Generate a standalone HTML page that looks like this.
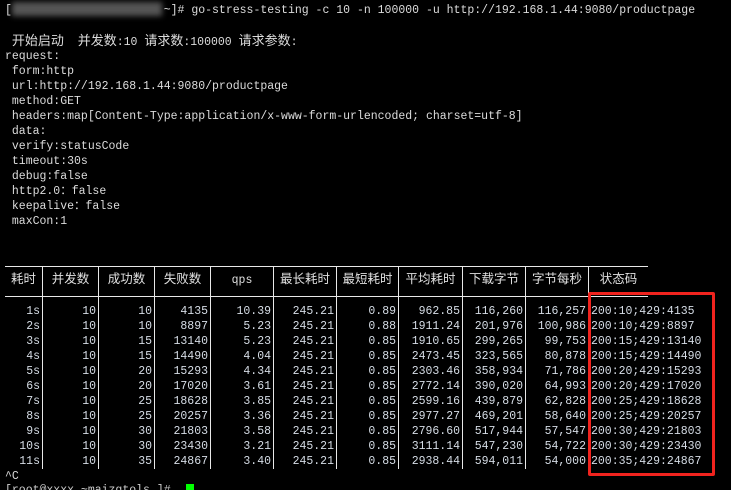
<!DOCTYPE html>
<html><head><meta charset="utf-8"><style>
html,body{margin:0;padding:0;background:#000;width:731px;height:490px;overflow:hidden;position:relative}
body{font-family:"Liberation Mono","Noto Sans CJK SC",monospace;font-size:11.5px;color:#dcdcdc}
.l{position:absolute;left:5px;white-space:pre;line-height:15px}
.r{position:absolute;left:0;height:15px;line-height:15px;white-space:pre}
.r span{position:absolute;top:0;text-align:right;color:#d6dde6}
.h{position:absolute;background:#e8e8e8}
.hd span{text-align:center;color:#e0e0e0;font-size:12.5px}
.c{font-size:13px}
</style></head><body>
<div style="position:absolute;left:12px;top:2px;width:150px;height:14px;background:#555;filter:blur(3px)"></div>
<div class="l" style="top:3px">[                      ~]# go-stress-testing -c 10 -n 100000 -u http://192.168.1.44:9080/productpage</div>
<div class="l" style="top:34px"> <span class="c">开始启动</span>  <span class="c">并发数</span>:10 <span class="c">请求数</span>:100000 <span class="c">请求参数</span>:</div>
<div class="l" style="top:49px">request:
 form:http
 url:http://192.168.1.44:9080/productpage
 method:GET
 headers:map[Content-Type:application/x-www-form-urlencoded; charset=utf-8]
 data:
 verify:statusCode
 timeout:30s
 debug:false
 http2.0：false
 keepalive：false
 maxCon:1</div>

<div class="h" style="left:5px;top:266px;width:643px;height:1px"></div>
<div class="h" style="left:5px;top:296px;width:643px;height:1px"></div>
<div class="h" style="left:42px;top:266px;width:1px;height:203px"></div>
<div class="h" style="left:98px;top:266px;width:1px;height:203px"></div>
<div class="h" style="left:154px;top:266px;width:1px;height:203px"></div>
<div class="h" style="left:210px;top:266px;width:1px;height:203px"></div>
<div class="h" style="left:273px;top:266px;width:1px;height:203px"></div>
<div class="h" style="left:336px;top:266px;width:1px;height:203px"></div>
<div class="h" style="left:398px;top:266px;width:1px;height:203px"></div>
<div class="h" style="left:462px;top:266px;width:1px;height:203px"></div>
<div class="h" style="left:525px;top:266px;width:1px;height:203px"></div>
<div class="h" style="left:588px;top:266px;width:1px;height:30px"></div>

<div class="r hd" style="top:273px">
<span style="left:5px;width:37px">耗时</span><span style="left:43px;width:55px">并发数</span><span style="left:99px;width:55px">成功数</span><span style="left:155px;width:55px">失败数</span><span style="left:211px;width:62px;font-size:11.5px">qps</span><span style="left:274px;width:62px">最长耗时</span><span style="left:337px;width:61px">最短耗时</span><span style="left:399px;width:63px">平均耗时</span><span style="left:463px;width:62px">下载字节</span><span style="left:526px;width:62px">字节每秒</span><span style="left:589px;width:59px">状态码</span>
</div>

<div class="r" style="top:304px"><span style="left:0;width:40px">1s</span><span style="left:0;width:96px">10</span><span style="left:0;width:152px">10</span><span style="left:0;width:208px">4135</span><span style="left:0;width:271px">10.39</span><span style="left:0;width:334px">245.21</span><span style="left:0;width:396px">0.89</span><span style="left:0;width:460px">962.85</span><span style="left:0;width:523px">116,260</span><span style="left:0;width:586px">116,257</span><span style="left:591px;text-align:left">200:10;429:4135</span></div>
<div class="r" style="top:319px"><span style="left:0;width:40px">2s</span><span style="left:0;width:96px">10</span><span style="left:0;width:152px">10</span><span style="left:0;width:208px">8897</span><span style="left:0;width:271px">5.23</span><span style="left:0;width:334px">245.21</span><span style="left:0;width:396px">0.88</span><span style="left:0;width:460px">1911.24</span><span style="left:0;width:523px">201,976</span><span style="left:0;width:586px">100,986</span><span style="left:591px;text-align:left">200:10;429:8897</span></div>
<div class="r" style="top:334px"><span style="left:0;width:40px">3s</span><span style="left:0;width:96px">10</span><span style="left:0;width:152px">15</span><span style="left:0;width:208px">13140</span><span style="left:0;width:271px">5.23</span><span style="left:0;width:334px">245.21</span><span style="left:0;width:396px">0.85</span><span style="left:0;width:460px">1910.65</span><span style="left:0;width:523px">299,265</span><span style="left:0;width:586px">99,753</span><span style="left:591px;text-align:left">200:15;429:13140</span></div>
<div class="r" style="top:349px"><span style="left:0;width:40px">4s</span><span style="left:0;width:96px">10</span><span style="left:0;width:152px">15</span><span style="left:0;width:208px">14490</span><span style="left:0;width:271px">4.04</span><span style="left:0;width:334px">245.21</span><span style="left:0;width:396px">0.85</span><span style="left:0;width:460px">2473.45</span><span style="left:0;width:523px">323,565</span><span style="left:0;width:586px">80,878</span><span style="left:591px;text-align:left">200:15;429:14490</span></div>
<div class="r" style="top:364px"><span style="left:0;width:40px">5s</span><span style="left:0;width:96px">10</span><span style="left:0;width:152px">20</span><span style="left:0;width:208px">15293</span><span style="left:0;width:271px">4.34</span><span style="left:0;width:334px">245.21</span><span style="left:0;width:396px">0.85</span><span style="left:0;width:460px">2303.46</span><span style="left:0;width:523px">358,934</span><span style="left:0;width:586px">71,786</span><span style="left:591px;text-align:left">200:20;429:15293</span></div>
<div class="r" style="top:379px"><span style="left:0;width:40px">6s</span><span style="left:0;width:96px">10</span><span style="left:0;width:152px">20</span><span style="left:0;width:208px">17020</span><span style="left:0;width:271px">3.61</span><span style="left:0;width:334px">245.21</span><span style="left:0;width:396px">0.85</span><span style="left:0;width:460px">2772.14</span><span style="left:0;width:523px">390,020</span><span style="left:0;width:586px">64,993</span><span style="left:591px;text-align:left">200:20;429:17020</span></div>
<div class="r" style="top:394px"><span style="left:0;width:40px">7s</span><span style="left:0;width:96px">10</span><span style="left:0;width:152px">25</span><span style="left:0;width:208px">18628</span><span style="left:0;width:271px">3.85</span><span style="left:0;width:334px">245.21</span><span style="left:0;width:396px">0.85</span><span style="left:0;width:460px">2599.16</span><span style="left:0;width:523px">439,879</span><span style="left:0;width:586px">62,828</span><span style="left:591px;text-align:left">200:25;429:18628</span></div>
<div class="r" style="top:409px"><span style="left:0;width:40px">8s</span><span style="left:0;width:96px">10</span><span style="left:0;width:152px">25</span><span style="left:0;width:208px">20257</span><span style="left:0;width:271px">3.36</span><span style="left:0;width:334px">245.21</span><span style="left:0;width:396px">0.85</span><span style="left:0;width:460px">2977.27</span><span style="left:0;width:523px">469,201</span><span style="left:0;width:586px">58,640</span><span style="left:591px;text-align:left">200:25;429:20257</span></div>
<div class="r" style="top:424px"><span style="left:0;width:40px">9s</span><span style="left:0;width:96px">10</span><span style="left:0;width:152px">30</span><span style="left:0;width:208px">21803</span><span style="left:0;width:271px">3.58</span><span style="left:0;width:334px">245.21</span><span style="left:0;width:396px">0.85</span><span style="left:0;width:460px">2796.60</span><span style="left:0;width:523px">517,944</span><span style="left:0;width:586px">57,547</span><span style="left:591px;text-align:left">200:30;429:21803</span></div>
<div class="r" style="top:439px"><span style="left:0;width:40px">10s</span><span style="left:0;width:96px">10</span><span style="left:0;width:152px">30</span><span style="left:0;width:208px">23430</span><span style="left:0;width:271px">3.21</span><span style="left:0;width:334px">245.21</span><span style="left:0;width:396px">0.85</span><span style="left:0;width:460px">3111.14</span><span style="left:0;width:523px">547,230</span><span style="left:0;width:586px">54,722</span><span style="left:591px;text-align:left">200:30;429:23430</span></div>
<div class="r" style="top:454px"><span style="left:0;width:40px">11s</span><span style="left:0;width:96px">10</span><span style="left:0;width:152px">35</span><span style="left:0;width:208px">24867</span><span style="left:0;width:271px">3.40</span><span style="left:0;width:334px">245.21</span><span style="left:0;width:396px">0.85</span><span style="left:0;width:460px">2938.44</span><span style="left:0;width:523px">594,011</span><span style="left:0;width:586px">54,000</span><span style="left:591px;text-align:left">200:35;429:24867</span></div>

<div style="position:absolute;left:588px;top:292px;width:121px;height:178px;border:3px solid #f0231e;border-radius:2px"></div>

<div class="l" style="top:469px">^C</div>
<div class="l" style="top:483px;color:#ccc">[root@xxxx ~maizgtols ]# </div>
<div style="position:absolute;left:186px;top:484px;width:8px;height:6px;background:#00ff00"></div>
</body></html>
